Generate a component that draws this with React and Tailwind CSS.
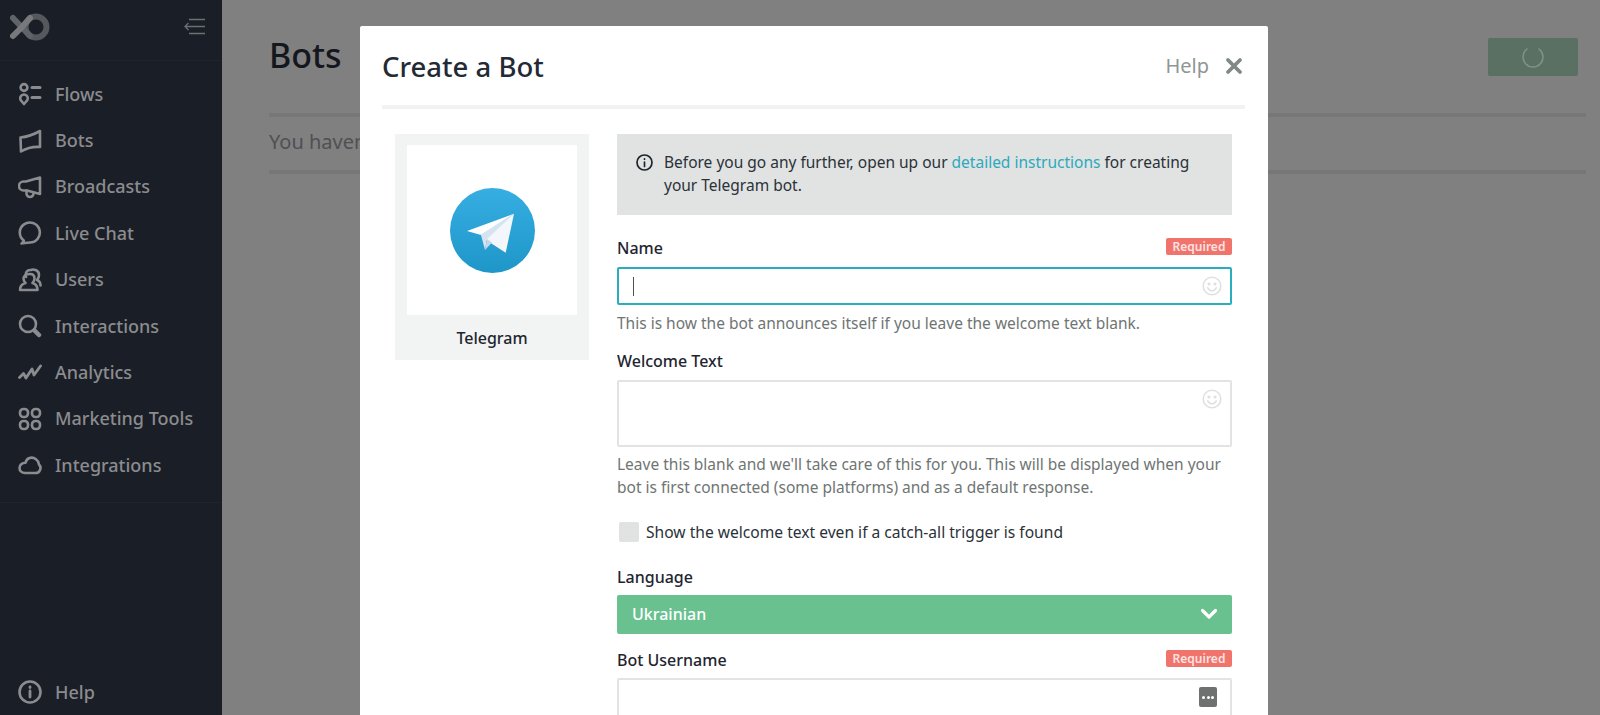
const ic = { width: 24, height: 24, viewBox: "0 0 24 24", fill: "none", stroke: "currentColor", strokeWidth: 2.6, strokeLinecap: "round", strokeLinejoin: "round", className: "shrink-0" };

const icons = {
  Flows: (
    <svg {...ic}>
      <circle cx="6" cy="5.5" r="3.4" />
      <path d="M6 22 3.400 19a3.800 3.800 0 1 1 5.200 0z" />
      <path d="M14 5.500h8M14 15.500h8" strokeWidth="3" />
    </svg>
  ),
  Bots: (
    <svg {...ic}>
      <path d="M2.500 8.500C8 8 15 6 22 2V18C15 17.500 8 19.500 3 22.500z" />
    </svg>
  ),
  Broadcasts: (
    <svg {...ic}>
      <path d="M22 2.500 L22 19 L9 15.500 H5.500 A4.200 4.200 0 0 1 5.500 6.500 H8 Z" />
      <path d="M8.500 15.500v3a3.500 3.500 0 0 0 7 0" />
    </svg>
  ),
  "Live Chat": (
    <svg {...ic}>
      <path d="M3.500 22.500c1.500-1 2.300-2 2.300-3A10 10 0 1 1 11.800 21.500c-3 0-5.500.8-8.300 1z" />
    </svg>
  ),
  Users: (
    <svg {...ic}>
      <path d="M8 9C7 5 9 1.500 13 2c1.500-.8 8-.8 8 5 0 2.500-.8 4-2 5 2 .8 3.500 2.500 3.500 5.500" />
      <path d="M12 6c3 0 4.500 2 4.500 4.500s-1 3.500-2 4.500c3 .8 5 2.500 5 7H2c0-4 2-6 5.500-7-1-1-2-2-2-4.500S8 6 12 6z" />
    </svg>
  ),
  Interactions: (
    <svg {...ic}>
      <circle cx="10" cy="10" r="8" />
      <path d="m16.500 16.500 4.500 4.500" strokeWidth="4.500" />
    </svg>
  ),
  Analytics: (
    <svg {...ic} strokeWidth="2.800">
      <path d="M1.500 16.500 5.500 12.500 8 17 14 8 16 14 22.500 5" />
    </svg>
  ),
  "Marketing Tools": (
    <svg {...ic}>
      <rect x="2" y="2" width="8" height="8" rx="3.500" />
      <rect x="14" y="2" width="8" height="8" rx="3.500" />
      <rect x="2" y="14" width="8" height="8" rx="3.500" />
      <rect x="14" y="14" width="8" height="8" rx="3.500" />
    </svg>
  ),
  Integrations: (
    <svg {...ic}>
      <path d="M7 20h10.500a5 5 0 0 0 3.500-8.500C20.500 7 16 3.500 11.500 5 9.500 5.700 8 7.500 7.500 9.800 4 9.800 1.500 12 1.500 15S4 20 7 20z" />
    </svg>
  ),
};

const items = Object.keys(icons);

function Smile() {
  return (
    <svg width="20" height="20" viewBox="0 0 20 20" fill="none" stroke="#dfe1df" strokeWidth="1.600" strokeLinecap="round">
      <circle cx="10" cy="10" r="8.800" />
      <circle cx="7" cy="8" r=".8" fill="#dfe1df" />
      <circle cx="13" cy="8" r=".8" fill="#dfe1df" />
      <path d="M5.800 11.800c1 2 2.500 3 4.200 3s3.200-1 4.200-3" />
    </svg>
  );
}

function Required() {
  return (
    <span className="h-[17px] w-[66px] rounded-[2px] bg-[#f0746c] text-center text-[12px] font-semibold leading-[17px] text-[#fbe3e1]">
      Required
    </span>
  );
}

export default function App() {
  return (
    <div className="relative flex h-screen overflow-hidden bg-[#808080] font-['Noto_Sans',sans-serif]">
      <aside className="flex h-full w-[222px] shrink-0 flex-col bg-[#1a1e26] text-[#8b8c8f]">
        <div className="flex h-[61px] items-center justify-between border-b border-[#20242c] pb-[7px] pl-[10px] pr-[16px]">
          <svg width="40" height="28" viewBox="0 0 40 28" fill="none">
            <circle cx="26" cy="14" r="10.500" stroke="#55585c" strokeWidth="6" />
            <path d="M3 5l17 18" stroke="#606367" strokeWidth="6" strokeLinecap="round" />
            <path d="M3 23 12 14 20 5" stroke="#77797c" strokeWidth="6" strokeLinecap="round" />
          </svg>
          <svg width="22" height="18" viewBox="0 0 22 18" fill="none" stroke="#6d6f73" strokeWidth="1.300">
            <path d="M5 1.500h16M1 8.500h20M5 15.500h16M4.500 5 1 8.500 4.500 12" />
          </svg>
        </div>
        <nav className="border-b border-[#20242c] pb-[13px] pt-[10px]">
          {items.map((name) => (
            <div key={name} className="flex h-[46.400px] items-center pl-[18px]">
              {icons[name]}
              <span className="ml-[13px] text-[18px] font-medium">{name}</span>
            </div>
          ))}
        </nav>
        <div className="mb-[11px] mt-auto flex h-[24px] items-center pl-[18px]">
          <svg {...ic}>
            <circle cx="12" cy="12" r="10.500" />
            <path d="M12 11v6M12 7v.5" strokeWidth="2.800" />
          </svg>
          <span className="ml-[13px] text-[18px] font-medium">Help</span>
        </div>
      </aside>

      <main className="min-w-0 flex-1 pl-[47px] pr-[14px] pt-[38px]">
        <div className="flex h-[75px] items-start justify-between pr-[8px]">
          <h1 className="mt-[-1px] text-[34px] font-medium leading-[36px] text-[#14171d]">Bots</h1>
          <div className="flex h-[38px] w-[90px] items-center justify-center rounded-[2px] bg-[#5a7063]">
            <svg width="24" height="24" viewBox="0 0 24 24" fill="none" stroke="#7f9488" strokeWidth="1.500" strokeLinecap="round">
              <path d="M6 4a10 10 0 1 0 12 0" />
            </svg>
          </div>
        </div>
        <div className="border-t-[4px] border-[#777777]" />
        <p className="mt-[11px] text-[20px] leading-[28px] text-[#4f5053]">You haven't created any bots yet.</p>
        <div className="mt-[14px] border-t-[4px] border-[#777777]" />
      </main>

      <div className="absolute left-[360px] top-[26px] w-[908px] rounded-t-[2px] bg-white pl-[22px] pr-[23px] text-[#1e2530]">
        <header className="flex h-[83px] items-center justify-between border-b-[4px] border-[#f1f3f2] pt-[1px]">
          <h2 className="mt-[2px] text-[27.500px] font-medium text-[#232a35]">Create a Bot</h2>
          <div className="flex items-center gap-[16px] pr-[2px]">
            <span className="text-[20px] text-[#8f9694]">Help</span>
            <svg width="18" height="18" viewBox="0 0 18 18" stroke="#818987" strokeWidth="3.800" strokeLinecap="round">
              <path d="M3 3l12 12M15 3 3 15" />
            </svg>
          </div>
        </header>

        <div className="flex items-start pl-[13px] pr-[13px] pt-[25px]">
          <div className="w-[194px] shrink-0 bg-[#f2f4f3] px-[12px] pt-[11px]">
            <div className="flex h-[170px] items-center justify-center bg-white">
              <svg width="85" height="85" viewBox="0 0 85 85">
                <defs>
                  <linearGradient id="tg" x1="0" y1="0" x2="0" y2="1">
                    <stop offset="0" stopColor="#37aee2" />
                    <stop offset="1" stopColor="#1e96c8" />
                  </linearGradient>
                </defs>
                <circle cx="42.500" cy="42.500" r="42.500" fill="url(#tg)" />
                <path d="M17 43 64 25.700 31 47z" fill="#fff" />
                <path d="M31 47 64 25.700 55.700 64.700 33 50z" fill="#f3f7fb" />
                <path d="M31 47 64 25.700 37 51 35 62z" fill="#d6e4f0" />
                <path d="M35 62 37 51 42 54.500z" fill="#c5d8e7" />
              </svg>
            </div>
            <div className="flex h-[45px] items-center justify-center text-[16px] font-medium">Telegram</div>
          </div>

          <div className="ml-[28px] min-w-0 flex-1">
            <div className="flex h-[81px] items-start bg-[#e0e3e1] pl-[19px] pr-[30px] pt-[17px] text-[15.500px] leading-[23px]">
              <svg width="17" height="17" viewBox="0 0 17 17" fill="none" stroke="#1e2530" strokeWidth="1.700" strokeLinecap="round" className="mt-[3px] shrink-0">
                <circle cx="8.500" cy="8.500" r="7.500" />
                <path d="M8.500 8v4.500M8.500 4.800v.4" />
              </svg>
              <p className="ml-[11px] text-[#2b3139]">
                Before you go any further, open up our <a className="text-[#2da9bd]">detailed instructions</a> for creating your Telegram bot.
              </p>
            </div>

            <div className="mt-[23px] flex h-[21px] items-start justify-between">
              <label className="text-[16px] font-medium leading-[21px]">Name</label>
              <Required />
            </div>
            <div className="mt-[8px] flex h-[38px] items-center justify-between rounded-[2px] border-2 border-[#2aaebd] pl-[14px] pr-[8px]">
              <span className="h-[19px] w-px bg-[#4a4f55]" />
              <Smile />
            </div>
            <p className="mt-[7px] text-[15.500px] leading-[22px] text-[#6f7573]">
              This is how the bot announces itself if you leave the welcome text blank.
            </p>

            <label className="mt-[17px] block text-[16px] font-medium leading-[21px]">Welcome Text</label>
            <div className="mt-[8px] flex h-[67px] items-start justify-end rounded-[2px] border-2 border-[#e2e4e3] pr-[8px] pt-[7px]">
              <Smile />
            </div>
            <p className="mt-[6px] text-[15.500px] leading-[23px] text-[#6f7573]">
              Leave this blank and we'll take care of this for you. This will be displayed when your bot is first connected (some platforms) and as a default response.
            </p>

            <div className="ml-[2px] mt-[23px] flex items-center">
              <span className="h-[20px] w-[20px] rounded-[2px] bg-[#e0e3e1]" />
              <span className="ml-[7px] text-[15.600px] leading-[20px] text-[#2b3139]">Show the welcome text even if a catch-all trigger is found</span>
            </div>

            <label className="mt-[25px] block text-[16px] font-medium leading-[21px]">Language</label>
            <div className="mt-[7px] flex h-[39px] items-center justify-between rounded-[2px] bg-[#69c18f] pb-[2px] pl-[15px] pr-[14px] text-white">
              <span className="text-[16px] font-medium">Ukrainian</span>
              <svg width="18" height="12" viewBox="0 0 18 12" fill="none" stroke="#fff" strokeWidth="3.200" strokeLinecap="round" strokeLinejoin="round">
                <path d="M2.500 2.500 9 9l6.500-6.500" />
              </svg>
            </div>

            <div className="mt-[16px] flex h-[21px] items-start justify-between">
              <label className="text-[16px] font-medium leading-[21px]">Bot Username</label>
              <Required />
            </div>
            <div className="mt-[7px] flex h-[60px] items-start justify-end rounded-[2px] border-2 border-[#e2e4e3] pr-[13px] pt-[7px]">
              <div className="flex h-[20px] w-[18px] items-center justify-center gap-[1.500px] rounded-[2px] bg-[#6f7170]">
                <i className="h-[3px] w-[3px] rounded-full bg-white" />
                <i className="h-[3px] w-[3px] rounded-full bg-white" />
                <i className="h-[3px] w-[3px] rounded-full bg-white" />
              </div>
            </div>
          </div>
        </div>
      </div>
    </div>
  );
}
